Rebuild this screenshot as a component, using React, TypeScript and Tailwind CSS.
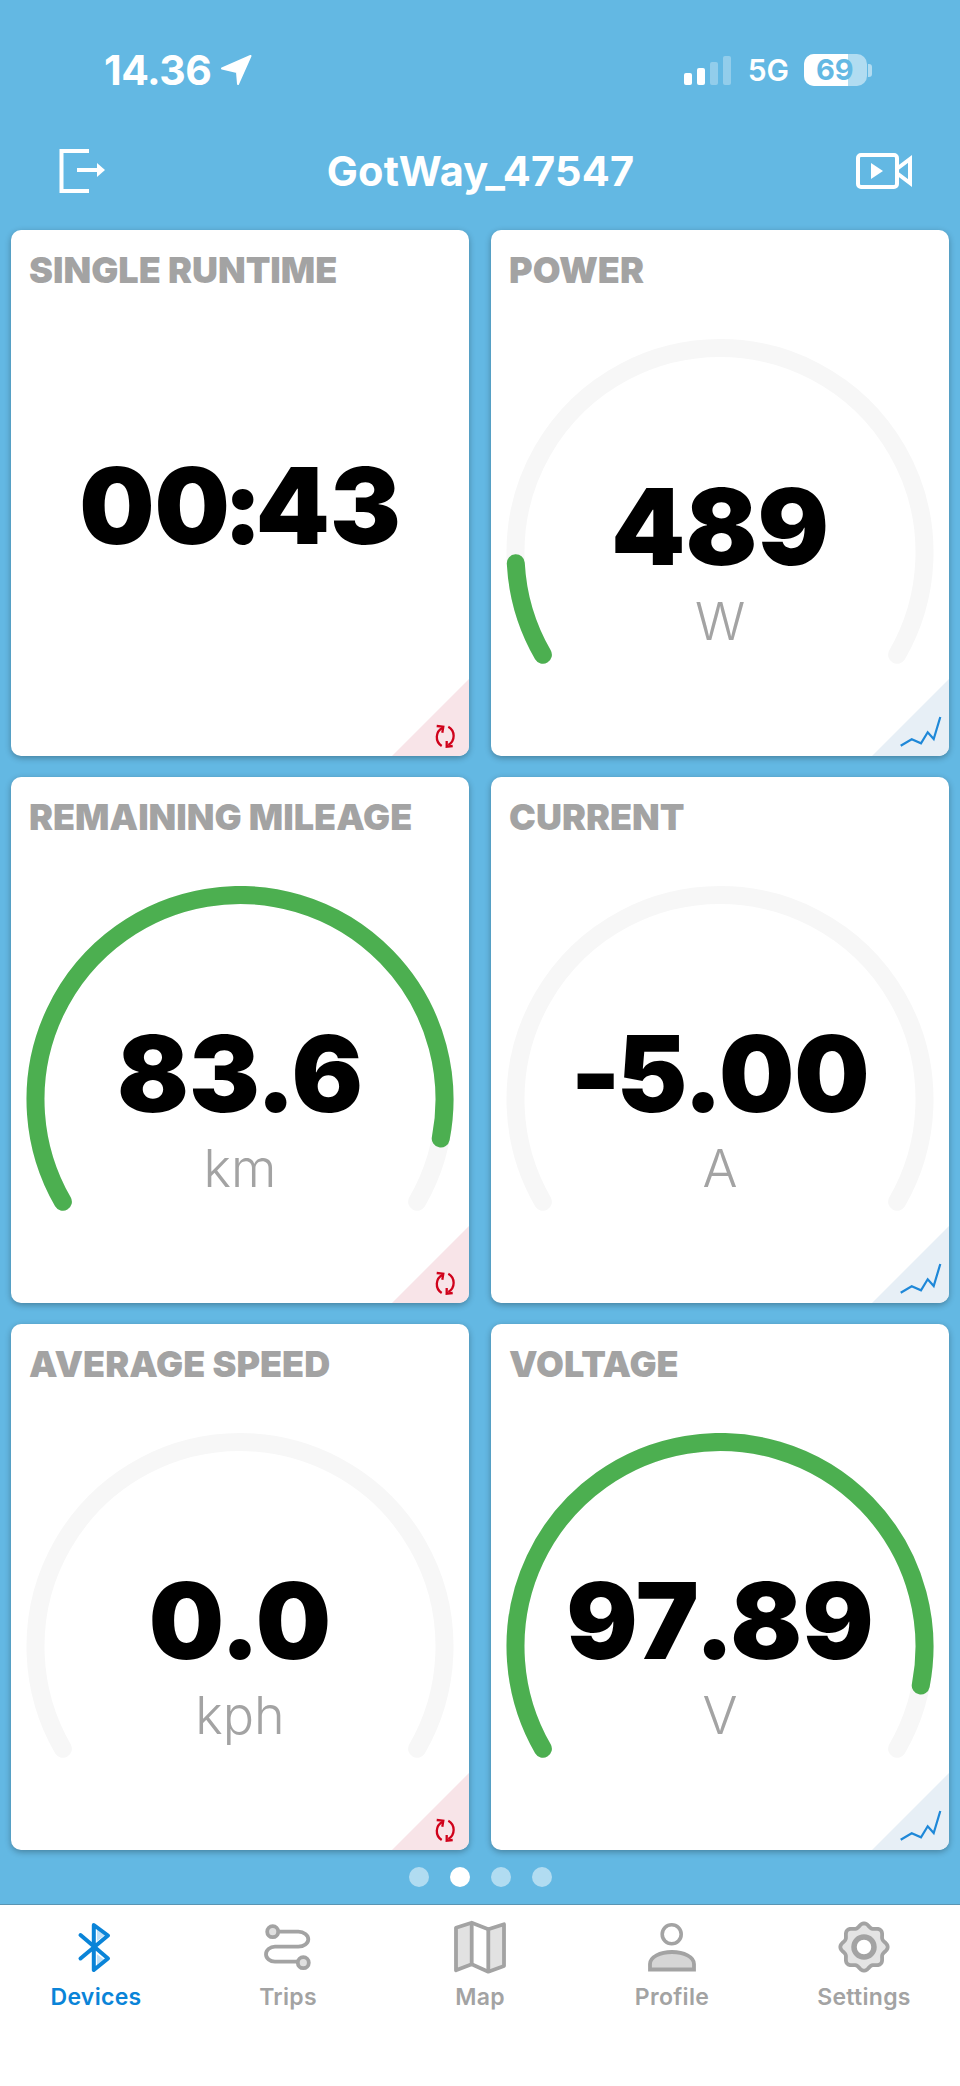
import React from "react";

const R = 204.5;
const CX = 229;
const CY = 213.5;
function pt(deg: number) {
  const a = (deg * Math.PI) / 180;
  return [CX + R * Math.cos(a), CY + R * Math.sin(a)];
}
function arc(from: number, to: number) {
  const [x1, y1] = pt(from);
  const [x2, y2] = pt(to);
  const large = to - from > 180 ? 1 : 0;
  return `M${x1} ${y1}A${R} ${R} 0 ${large} 1 ${x2} ${y2}`;
}

function Corner({ kind }: { kind: "reset" | "chart" }) {
  return (
    <svg viewBox="0 0 77 77" className="absolute right-0 bottom-0 h-[77px] w-[77px]">
      <polygon points="77,0 77,77 0,77" fill={kind === "reset" ? "#f8e4e8" : "#e7eff6"} />
      {kind === "reset" ? (
        <g fill="none" stroke="#d0021b" strokeWidth="2.3">
          <path d="M50.7 48.7A10.5 10.5 0 0 0 49.7 67" />
          <path d="M56.3 47.7A10.5 10.5 0 0 1 56.3 66" />
          <path d="M44.7 47L51.3 47.7L50.3 53.7" />
          <path d="M54.7 62L54.7 67.7L60.7 67" />
        </g>
      ) : (
        <polyline points="28.7,66.7 39.7,60.3 49,64.3 55.7,53.3 61.7,60 68.3,38" fill="none" stroke="#1f88d8" strokeWidth="2.2" />
      )}
    </svg>
  );
}

function Value({ text }: { text: string }) {
  return (
    <>
      {text.split("").map((c, i) =>
        c === "." ? (
          <span key={i} className="mx-[-4px]">{c}</span>
        ) : c === ":" ? (
          <span key={i} className="mx-[-7px]">{c}</span>
        ) : c === "-" ? (
          <span key={i} className="mr-[-4px]">{c}</span>
        ) : (
          <span key={i}>{c}</span>
        )
      )}
    </>
  );
}

function Card({ title, value, unit, to, kind }: { title: string; value: string; unit?: string; to?: number; kind: "reset" | "chart" }) {
  return (
    <div className="relative h-[526px] overflow-hidden rounded-[10px] bg-white shadow-[0_2px_6px_rgba(0,0,0,0.3)]">
      <div className="px-[18px] pt-[18px] text-[36px] leading-[44px] font-black text-[#a3a3a3] whitespace-nowrap">{title}</div>
      {unit ? (
        <div className="relative mt-[47px] h-[400px] w-full">
          <svg viewBox="0 0 458 400" className="absolute inset-0 h-full w-full">
            <path d={arc(150, 390)} fill="none" stroke="#f7f7f7" strokeWidth="18" strokeLinecap="round" />
            {to !== undefined && <path d={arc(150, to)} fill="none" stroke="#4caf50" strokeWidth="18" strokeLinecap="round" />}
          </svg>
          <div className="relative flex h-full flex-col items-center">
            <div className="mt-[143px] text-[106px] leading-[90px] font-black text-black"><Value text={value} /></div>
            <div className="mt-[20px] text-[52px] leading-[60px] font-light text-[#a3a3a3]">{unit}</div>
          </div>
        </div>
      ) : (
        <div className="mt-[169px] text-center text-[106px] leading-[90px] font-black text-black"><Value text={value} /></div>
      )}
      <Corner kind={kind} />
    </div>
  );
}

function Bluetooth() {
  return (
    <svg viewBox="0 0 40 54" className="h-[54px] w-[40px]">
      <polygon points="21,9.3 28.8,15 21,21" fill="#bfe0f7" />
      <polygon points="21,34.3 28.8,40 21,46" fill="#bfe0f7" />
      <path d="M4.5 15L32 38.5L17.8 50V5L32 15.5L4.5 38.5" fill="none" stroke="#0a84d8" strokeWidth="4" strokeLinecap="round" strokeLinejoin="round" />
    </svg>
  );
}
function Trips() {
  return (
    <svg viewBox="0 0 50 54" className="h-[54px] w-[50px]">
      <path d="M15 11.7H35.3A10 7.5 0 0 1 35.3 26.7H12A9 7.5 0 0 0 12 41.7H35" fill="none" stroke="#a3a3a3" strokeWidth="3.8" />
      <circle cx="9.7" cy="11.7" r="5.5" fill="#e0e0e0" stroke="#a3a3a3" strokeWidth="3.8" />
      <circle cx="40.3" cy="42.7" r="5.5" fill="#e0e0e0" stroke="#a3a3a3" strokeWidth="3.8" />
    </svg>
  );
}
function MapIcon() {
  return (
    <svg viewBox="0 0 54 54" className="h-[54px] w-[54px]">
      <path d="M3 7.7L18.7 2.7V44.3L3 50.3Z" fill="#e2e2e2" />
      <path d="M35.3 9.3L51 4.3V46L35.3 51.7Z" fill="#e2e2e2" />
      <path d="M3 7.7L18.7 2.7L35.3 9.3L51 4.3V46L35.3 51.7L18.7 44.3L3 50.3Z" fill="none" stroke="#a3a3a3" strokeWidth="3.8" strokeLinejoin="round" />
      <path d="M18.7 2.7V44.3M35.3 9.3V51.7" fill="none" stroke="#a3a3a3" strokeWidth="3.8" />
    </svg>
  );
}
function Profile() {
  return (
    <svg viewBox="0 0 52 54" className="h-[54px] w-[52px]">
      <circle cx="25.7" cy="14.3" r="9.5" fill="#fff" stroke="#a3a3a3" strokeWidth="3.6" />
      <path d="M4 49.5V44C4 37 14 32 26 32C38 32 48 37 48 44V49.5Z" fill="#d6d6d6" stroke="#a3a3a3" strokeWidth="3.8" />
    </svg>
  );
}
function Gear() {
  let d = "";
  for (let i = 0; i < 96; i++) {
    const t = (i / 96) * Math.PI * 2;
    const r = 21.8 + 1.9 * Math.cos(8 * t);
    const x = 27 + r * Math.sin(t);
    const y = 27 - r * Math.cos(t);
    d += `${i === 0 ? "M" : "L"}${x.toFixed(2)} ${y.toFixed(2)}`;
  }
  return (
    <svg viewBox="0 0 54 54" className="h-[54px] w-[54px]">
      <path d={d + "Z"} fill="#e4e4e4" stroke="#a3a3a3" strokeWidth="3.8" strokeLinejoin="round" />
      <circle cx="27" cy="27" r="10" fill="#fff" stroke="#a3a3a3" strokeWidth="5.5" />
    </svg>
  );
}

function Tab({ label, active, children }: { label: string; active?: boolean; children: React.ReactNode }) {
  return (
    <div className="flex flex-col items-center">
      <div className="flex h-[54px] items-center justify-center">{children}</div>
      <div className={`mt-[10px] text-[23px] leading-[26px] font-semibold tracking-[0.3px] ${active ? "text-[#0a84d8]" : "text-[#a3a3a3]"}`}>{label}</div>
    </div>
  );
}

export default function App() {
  return (
    <div className="flex h-[2086px] w-[960px] flex-col overflow-hidden bg-[#63b8e3] font-['Inter',sans-serif]">
      <div className="flex h-[140px] items-center justify-between pr-[88px] pl-[104px] text-white">
        <div className="flex items-center gap-[9px]">
          <span className="text-[41px] leading-[44px] font-bold tracking-[-0.5px]">14.36</span>
          <svg viewBox="0 0 32 32" className="h-[32px] w-[32px]">
            <path d="M30.5 2L2 14.5L17 18L18 30Z" fill="#fff" stroke="#fff" strokeWidth="2" strokeLinejoin="round" />
          </svg>
        </div>
        <div className="flex items-center">
          <div className="flex items-end gap-[5px]">
            <div className="h-[12px] w-[8px] rounded-[2px] bg-white" />
            <div className="h-[17px] w-[8px] rounded-[2px] bg-white" />
            <div className="h-[23px] w-[8px] rounded-[2px] bg-white/30" />
            <div className="h-[29px] w-[8px] rounded-[2px] bg-white/30" />
          </div>
          <span className="ml-[17px] text-[30px] leading-[36px] font-semibold">5G</span>
          <div className="ml-[15px] flex items-center gap-[1px]">
            <div className="relative flex h-[32px] w-[63px] items-center overflow-hidden rounded-[10px] bg-white/50">
              <div className="h-full w-[44px] bg-white" />
              <span className="absolute inset-0 pl-[12px] text-[29px] leading-[32px] font-bold text-[#63b8e3]">69</span>
            </div>
            <div className="h-[13px] w-[4px] rounded-r-[3px] bg-white/50" />
          </div>
        </div>
      </div>
      <div className="flex h-[90px] items-center justify-between pr-[48px] pl-[59px] pb-[28px] text-white">
        <svg viewBox="0 0 46 46" className="h-[46px] w-[46px]">
          <path d="M30 3H2.5V43H30" fill="none" stroke="#fff" strokeWidth="4" />
          <path d="M18 22H40" stroke="#fff" strokeWidth="4" />
          <path d="M38 15L46 22L38 29Z" fill="#fff" />
        </svg>
        <div className="text-[41.5px] leading-[48px] font-bold tracking-[0.2px]">GotWay_47547</div>
        <svg viewBox="0 0 56 36" className="h-[36px] w-[56px]">
          <rect x="2" y="2" width="39" height="32" rx="3" fill="none" stroke="#fff" strokeWidth="4" />
          <path d="M15 10L27 18L15 26Z" fill="#fff" />
          <path d="M42 15L54 6V30L42 21" fill="none" stroke="#fff" strokeWidth="4" />
        </svg>
      </div>
      <div className="grid grid-cols-2 gap-x-[22px] gap-y-[21px] px-[11px]">
        <Card title="SINGLE RUNTIME" value="00:43" kind="reset" />
        <Card title="POWER" value="489" unit="W" to={177} kind="chart" />
        <Card title="REMAINING MILEAGE" value="83.6" unit="km" to={371} kind="reset" />
        <Card title="CURRENT" value="-5.00" unit="A" kind="chart" />
        <Card title="AVERAGE SPEED" value="0.0" unit="kph" kind="reset" />
        <Card title="VOLTAGE" value="97.89" unit="V" to={371} kind="chart" />
      </div>
      <div className="flex h-[54px] items-center justify-center gap-[21px]">
        <div className="h-[20px] w-[20px] rounded-full bg-white/50" />
        <div className="h-[20px] w-[20px] rounded-full bg-white" />
        <div className="h-[20px] w-[20px] rounded-full bg-white/50" />
        <div className="h-[20px] w-[20px] rounded-full bg-white/50" />
      </div>
      <div className="grid flex-1 grid-cols-5 border-t border-[#5a94b3] bg-white pt-[15px]">
        <Tab label="Devices" active><Bluetooth /></Tab>
        <Tab label="Trips"><Trips /></Tab>
        <Tab label="Map"><MapIcon /></Tab>
        <Tab label="Profile"><Profile /></Tab>
        <Tab label="Settings"><Gear /></Tab>
      </div>
    </div>
  );
}
